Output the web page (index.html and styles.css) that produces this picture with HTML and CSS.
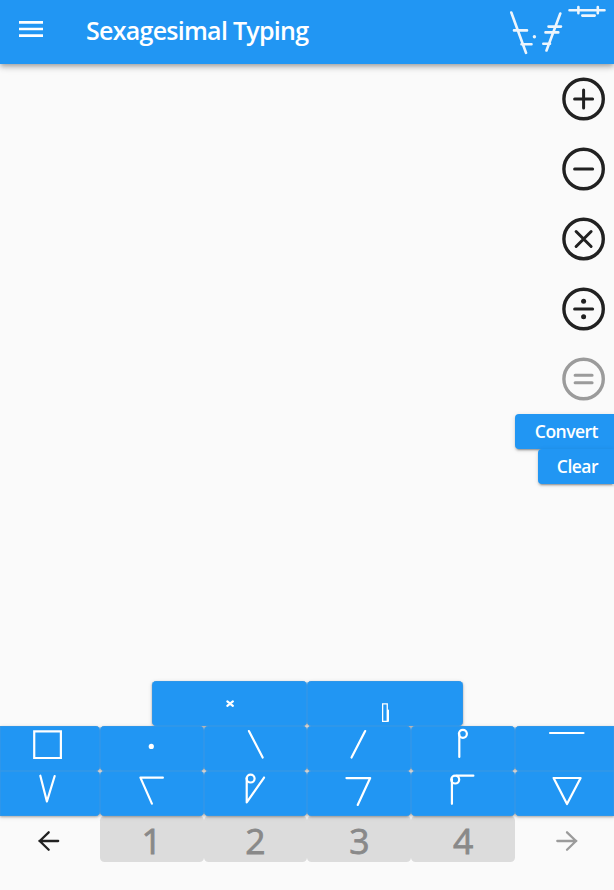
FILE: index.html
```html
<!DOCTYPE html>
<html lang="en">
<head>
<meta charset="utf-8">
<title>Sexagesimal Typing</title>
<link rel="stylesheet" href="styles.css">
</head>
<body>
<header class="bar">
  <svg class="menu" width="24" height="18" viewBox="0 0 24 18"><path d="M0 2.4h24M0 9h24M0 15.6h24"/></svg>
  <h1 class="title">Sexagesimal Typing</h1>
  <svg class="numeral" width="104" height="64" viewBox="510 0 104 64">
    <path d="M511.3 12.5L526 52.8M514 30.4H527M521.5 44.3H531.5M560.3 13.5L546.5 50.5M548.5 26.6H561M545.5 32.4H558.3M543.3 43.7H550M569.5 10.3H604.5M578.4 7V13.3M597.8 7V13.3M582.3 15.6H594.7"/>
    <circle cx="534.4" cy="36.8" r="1.7"/>
  </svg>
</header>
<main class="work">
  <div class="ops">
    <svg class="op" viewBox="0 0 44 44"><circle cx="22" cy="22" r="19.7"/><path d="M13 22H31M22 13V31"/></svg>
    <svg class="op" viewBox="0 0 44 44"><circle cx="22" cy="22" r="19.7"/><path d="M13 22H31"/></svg>
    <svg class="op" viewBox="0 0 44 44"><circle cx="22" cy="22" r="19.7"/><path d="M14.5 14.5L29.5 29.5M29.5 14.5L14.5 29.5"/></svg>
    <svg class="op" viewBox="0 0 44 44"><circle cx="22" cy="22" r="19.7"/><path d="M13 22H31"/><circle class="dot" cx="22" cy="14.3" r="2.5"/><circle class="dot" cx="22" cy="29.7" r="2.5"/></svg>
    <svg class="op off" viewBox="0 0 44 44"><circle cx="22" cy="22" r="19.7"/><path d="M13.5 18.2H30.5M13.5 25.8H30.5"/></svg>
  </div>
  <button class="action">Convert</button>
  <button class="action clear">Clear</button>
</main>
<section class="pad">
  <div class="keys">
    <div class="wide">
      <button class="key"><svg viewBox="152 681 155 45"><path d="M227 701.3L232.5 705.7M232.5 701.3L227 705.7"/></svg></button>
      <button class="key"><svg viewBox="308 681 155 45"><path class="thin" d="M383.3 703.7H387.9V721.3H383.3ZM389 710V721"/></svg></button>
    </div>
    <div class="row">
      <button class="key first"><svg viewBox="0 726 100 45"><path class="sq" d="M34.3 731.4H61V758H34.3Z"/></svg></button>
      <button class="key"><svg viewBox="100 726 104 45"><circle class="dot" cx="151.4" cy="746.4" r="2.6"/></svg></button>
      <button class="key"><svg viewBox="204 726 104 45"><path d="M249 731L262.8 757.5"/></svg></button>
      <button class="key"><svg viewBox="308 726 104 45"><path d="M366.3 731L352.6 757.5"/></svg></button>
      <button class="key"><svg viewBox="411 726 104 45"><circle cx="463" cy="733.8" r="4"/><path d="M459.4 734V757"/></svg></button>
      <button class="key last"><svg viewBox="515 726 99 45"><path d="M550 733H583.5"/></svg></button>
    </div>
    <div class="row">
      <button class="key first"><svg viewBox="0 771 100 45"><path d="M40.4 775.7L47 801.5L54.8 776"/></svg></button>
      <button class="key"><svg viewBox="100 771 104 45"><path d="M163 777.6H140.5L152 803.7"/></svg></button>
      <button class="key"><svg viewBox="204 771 104 45"><circle cx="250.7" cy="778.5" r="4"/><path d="M246.8 778V802.5L264.2 777.5"/></svg></button>
      <button class="key"><svg viewBox="308 771 104 45"><path d="M347.5 778H371.3L358.8 805"/></svg></button>
      <button class="key"><svg viewBox="411 771 104 45"><circle cx="455.3" cy="779.5" r="4"/><path d="M452 779V803.8M457 775.6H473.5"/></svg></button>
      <button class="key last"><svg viewBox="515 771 99 45"><path d="M553.6 778H580.6L567 804Z"/></svg></button>
    </div>
  </div>
  <div class="row digits">
    <button class="nav"><svg viewBox="0 816 100 46"><path d="M58.3 841H39.5M48.8 832.3L39.8 841L48.8 849.8"/></svg></button>
    <button class="digit">1</button>
    <button class="digit">2</button>
    <button class="digit">3</button>
    <button class="digit">4</button>
    <button class="nav off"><svg viewBox="515 816 99 46"><path d="M557.3 841H576.3M567 832.3L576 841L567 849.8"/></svg></button>
  </div>
</section>
</body>
</html>
```

FILE: styles.css
```css
* { box-sizing: border-box; }
body {
  margin: 0;
  height: 890px;
  display: flex;
  flex-direction: column;
  overflow: hidden;
  background: #fafafa;
  font-family: "Open Sans", "Noto Sans", sans-serif;
}
button { border: 0; margin: 0; padding: 0; font-family: inherit; }
svg { display: block; fill: none; stroke-linecap: round; stroke-linejoin: round; }

.bar {
  height: 64px;
  display: flex;
  align-items: center;
  background: #2196f3;
  box-shadow: 0 2px 4px -1px rgba(0,0,0,.2), 0 4px 5px rgba(0,0,0,.14), 0 1px 10px rgba(0,0,0,.12);
}
.menu { margin: -6px 0 0 19px; stroke: #fff; stroke-width: 2.7; stroke-linecap: butt; }
.title {
  margin: -4px auto 0 43px;
  color: #fff;
  font-size: 25px;
  font-weight: 600;
  letter-spacing: -.73px;
  white-space: nowrap;
}
.numeral { stroke: #edf5fc; stroke-width: 2.6; }
.numeral circle { fill: #edf5fc; stroke: none; }

.work { flex: 1; display: flex; flex-direction: column; align-items: flex-end; }
.ops { display: flex; flex-direction: column; gap: 26px; padding: 13px 8.5px 13px 0; }
.op { width: 44px; height: 44px; stroke: #212121; stroke-width: 3; transform: translateX(-.4px); }
.op > circle { stroke-width: 3.4; }
.op .dot { fill: #212121; stroke: none; }
.op.off { stroke: #9b9b9b; }
.action {
  width: 98.7px;
  height: 35px;
  padding: 0 16px 1px 0;
  text-align: right;
  border-radius: 4px 0 0 4px;
  background: #2196f3;
  color: #fff;
  font-size: 17.5px;
  font-weight: 600;
  letter-spacing: -.52px;
  box-shadow: 0 3px 1px -2px rgba(0,0,0,.2), 0 2px 2px rgba(0,0,0,.14), 0 1px 5px rgba(0,0,0,.12);
}
.action.clear { width: 76.3px; }

.pad { height: 209px; }
.keys {
  position: relative;
  z-index: 1;
  filter: drop-shadow(0 1.5px 1px rgba(0,0,0,.26)) drop-shadow(0 1px 2px rgba(0,0,0,.12));
}
.wide { display: grid; grid-template-columns: 155.7px 155.7px; height: 45px; padding-left: 151.8px; }
.row { display: grid; grid-template-columns: 99.8px repeat(4, 103.8px) 1fr; height: 45px; }
.key {
  border-radius: 4.5px;
  background: #2196f3;
  box-shadow: inset 0 0 0 .5px #3d97e2;
}
.key.first { border-radius: 0 4.5px 4.5px 0; }
.key.last { border-radius: 4.5px 0 0 4.5px; }
.key svg, .nav svg { width: 100%; height: 100%; }
.key svg { stroke: #fff; stroke-width: 2.2; }
.key .dot { fill: #fff; stroke: none; }
.key .thin { stroke-width: 1.3; stroke-linejoin: miter; }
.key .sq { stroke-linejoin: miter; }
.digit {
  height: 46px;
  border-radius: 4.5px;
  background: #dcdcdc;
  color: #898989;
  font-size: 35.5px;
  font-weight: 400;
  -webkit-text-stroke: .8px #898989;
  line-height: 46px;
  padding-top: 1px;
}
.nav { height: 46px; background: none; }
.nav svg { stroke: #212121; stroke-width: 2.3; }
.nav.off svg { stroke: #9b9b9b; }
```
